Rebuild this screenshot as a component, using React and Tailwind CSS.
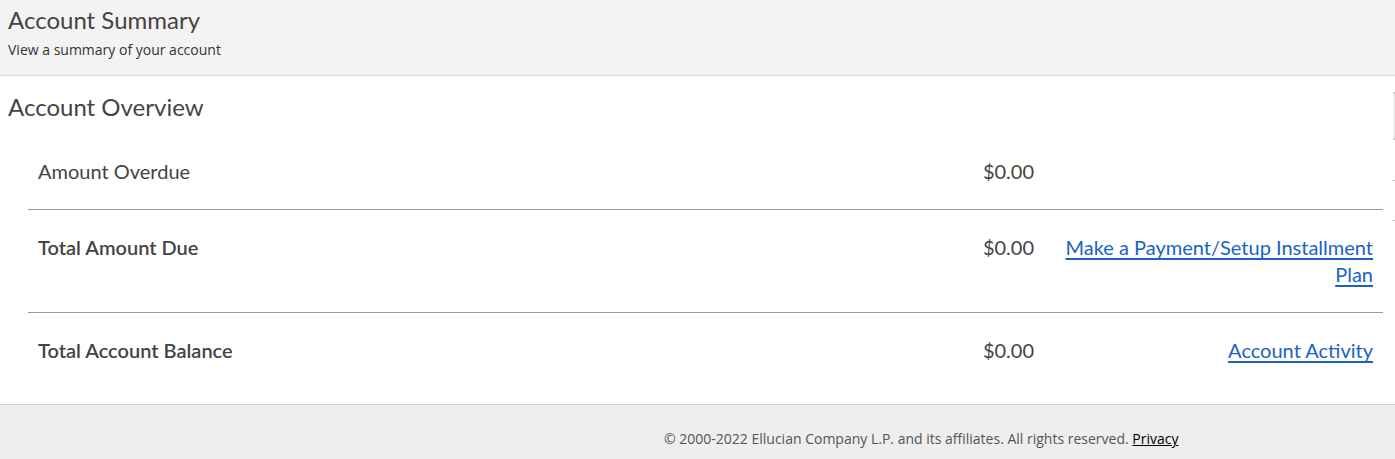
import React from "react";

const rows = [
  { label: "Amount Overdue", amount: "$0.00", bold: false },
  { label: "Total Amount Due", amount: "$0.00", bold: true, link: "Make a Payment/Setup Installment Plan" },
  { label: "Total Account Balance", amount: "$0.00", bold: true, link: "Account Activity" },
];

export default function App() {
  return (
    <div className="relative w-[1395px] h-[459px] overflow-hidden bg-white text-[#444]" style={{ fontFamily: "Lato, 'Noto Sans', sans-serif" }}>
      <div className="h-[76px] bg-[#f3f3f3] border-b border-[#dcdcdc] pl-[8px] pt-[5px]">
        <h1 className="text-[24px] leading-[30px] text-[#444]">Account Summary</h1>
        <p className="mt-[6px] text-[14px] leading-[18px] text-[#333]" style={{ fontFamily: "'Open Sans', sans-serif" }}>
          View a summary of your account
        </p>
      </div>

      <div className="h-[328px] pl-[8px] pr-[12px] pt-[16px]">
        <h2 className="text-[24px] leading-[30px] text-[#444]">Account Overview</h2>
        <div className="ml-[20px] mt-[12px]">
          {rows.map((r, i) => (
            <div
              key={r.label}
              className={`flex items-start px-[10px] py-[24px] ${i < rows.length - 1 ? "border-b border-[#999]" : ""}`}
            >
              <div className={`flex-1 text-[20px] leading-[27px] ${r.bold ? "font-semibold" : ""}`}>{r.label}</div>
              <div className="text-[20px] leading-[27px] text-right">{r.amount}</div>
              <div className="w-[339px] pl-[20px] text-right text-[20px] leading-[27px]">
                {r.link && (
                  <a href="#" className="text-[#1a62c7] underline underline-offset-[3px]">
                    {r.link}
                  </a>
                )}
              </div>
            </div>
          ))}
        </div>
      </div>

      <div className="h-[55px] bg-[#eeeeee] border-t border-[#d4d4d4] pl-[664px] pt-[25px] text-[14px] leading-[18px] text-[#555]" style={{ fontFamily: "'Open Sans', sans-serif" }}>
        © 2000-2022 Ellucian Company L.P. and its affiliates. All rights reserved.{" "}
        <a href="#" className="text-black underline">Privacy</a>
      </div>

      <div className="absolute right-0 top-[92px] w-[2px] h-[48px] bg-[#eee] border-y-[2px] border-[#ccc]" />
      <div className="absolute right-0 top-[180px] w-[2px] h-px bg-[#bbb]" />
      <div className="absolute right-0 top-[220px] w-[2px] h-px bg-[#bbb]" />
    </div>
  );
}
